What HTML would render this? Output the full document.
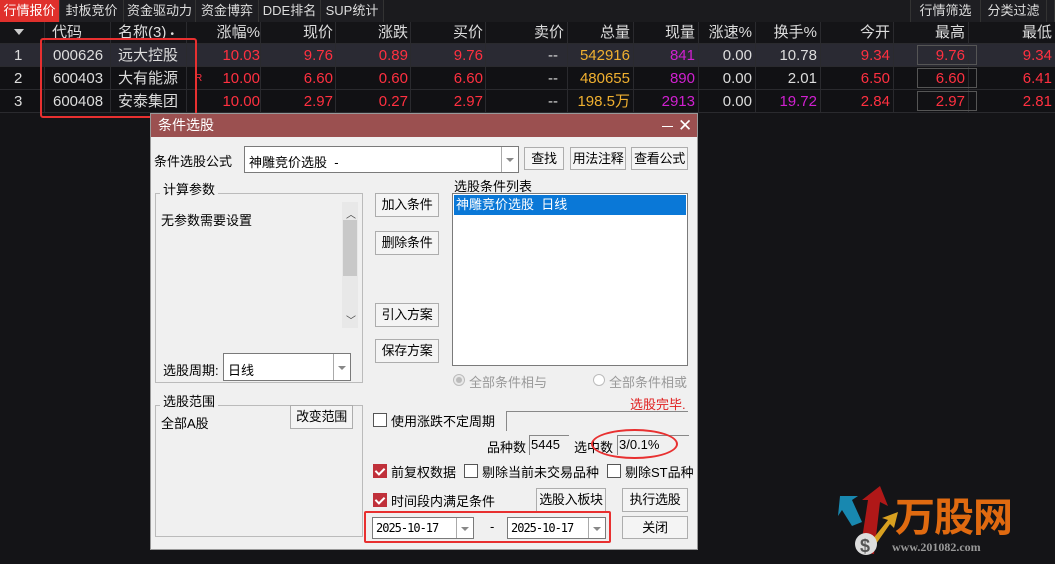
<!DOCTYPE html>
<html><head><meta charset="utf-8"><style>
*{margin:0;padding:0;box-sizing:border-box}
body{width:1055px;height:564px;background:#141417;overflow:hidden;position:relative;font-family:"Liberation Sans","Noto Sans CJK SC",sans-serif;font-size:14px;color:#ddd}
.a{position:absolute;white-space:nowrap}
.tab{position:absolute;top:0;height:22px;line-height:22px;font-size:13px;color:#ddd;background:#1e1e22;border-right:1px solid #333;text-align:center}
.row{position:absolute;left:0;width:1055px;height:23px;border-bottom:1px solid #2a2a2e}
.c{position:absolute;height:23px;line-height:23px;font-size:15px;text-align:right;white-space:nowrap}
.sep{position:absolute;top:22px;width:1px;height:91px;background:#2a2a2e}
.r{color:#ff3040}.y{color:#f0b030}.m{color:#d020d0}.w{color:#ddd}
.dlg{position:absolute;left:150px;top:113px;width:548px;height:437px;background:#f0f0f0;border:1px solid #999;color:#000;font-size:13px}
.dlg div,.dlg span{white-space:nowrap}
.btn{position:absolute;background:#f4f4f4;border:1px solid #adadad;text-align:center;font-size:13px;color:#000;letter-spacing:-0.3px}
.box{position:absolute;background:#fff;border:1px solid #7a7a7a}
.dd{position:absolute;top:0;right:0;width:17px;height:100%;border-left:1px solid #aaa;background:#fff}
.dd:after{content:"";position:absolute;left:4px;top:45%;border:4px solid transparent;border-top:4px solid #888}
.cb{position:absolute;width:14px;height:14px;border:1px solid #555;background:#fff}
.cb.on{background:#c0303a;border-color:#c0303a}
.cb.on:after{content:"";position:absolute;left:3px;top:1px;width:4px;height:7px;border:solid #fff;border-width:0 2px 2px 0;transform:rotate(45deg)}
.grp{position:absolute;border:1px solid #bbb}
.t{font-size:13px}
</style></head><body>
<div class="tab" style="left:0;width:60px;background:#e0302c;color:#fff">行情报价</div>
<div class="tab" style="left:60px;width:64px">封板竞价</div>
<div class="tab" style="left:124px;width:72px">资金驱动力</div>
<div class="tab" style="left:196px;width:63px">资金博弈</div>
<div class="tab" style="left:259px;width:62px">DDE排名</div>
<div class="tab" style="left:321px;width:63px">SUP统计</div>
<div class="a" style="left:384px;top:0;width:536px;height:22px;background:#1b1b1e"></div>
<div class="tab" style="left:910px;width:71px;border-left:1px solid #333">行情筛选</div>
<div class="tab" style="left:981px;width:66px">分类过滤</div>
<div class="tab" style="left:1047px;width:8px"></div>

<div class="row" style="top:22px;height:22px;background:#141417"></div>
<div class="row" style="top:44px;background:#2a2a33"></div>
<div class="row" style="top:67px;background:#111114"></div>
<div class="row" style="top:90px;background:#111114"></div>
<div class="sep" style="left:44px"></div><div class="sep" style="left:110px"></div><div class="sep" style="left:186px"></div><div class="sep" style="left:260px"></div><div class="sep" style="left:335px"></div><div class="sep" style="left:410px"></div><div class="sep" style="left:485px"></div><div class="sep" style="left:567px"></div><div class="sep" style="left:633px"></div><div class="sep" style="left:698px"></div><div class="sep" style="left:755px"></div><div class="sep" style="left:820px"></div><div class="sep" style="left:893px"></div><div class="sep" style="left:968px"></div>
<div class="a" style="left:14px;top:29px;border:5px solid transparent;border-top:6px solid #ccc"></div>
<div class="c w" style="left:52px;top:21px;text-align:left">代码</div>
<div class="c w" style="left:118px;top:21px;text-align:left">名称(3) <span style="font-size:10px">•</span></div>
<div class="c w" style="right:795px;top:21px">涨幅%</div>
<div class="c w" style="right:722px;top:21px">现价</div>
<div class="c w" style="right:647px;top:21px">涨跌</div>
<div class="c w" style="right:572px;top:21px">买价</div>
<div class="c w" style="right:491px;top:21px">卖价</div>
<div class="c w" style="right:425px;top:21px">总量</div>
<div class="c w" style="right:360px;top:21px">现量</div>
<div class="c w" style="right:303px;top:21px">涨速%</div>
<div class="c w" style="right:238px;top:21px">换手%</div>
<div class="c w" style="right:165px;top:21px">今开</div>
<div class="c w" style="right:90px;top:21px">最高</div>
<div class="c w" style="right:3px;top:21px">最低</div>

<div class="c w" style="left:14px;top:44px">1</div>
<div class="c w" style="left:14px;top:67px">2</div>
<div class="c w" style="left:14px;top:90px">3</div>
<div class="c w" style="left:53px;top:44px;text-align:left">000626</div><div class="c w" style="left:118px;top:44px;text-align:left">远大控股</div>
<div class="c w" style="left:53px;top:67px;text-align:left">600403</div><div class="c w" style="left:118px;top:67px;text-align:left">大有能源</div>
<div class="c w" style="left:53px;top:90px;text-align:left">600408</div><div class="c w" style="left:118px;top:90px;text-align:left">安泰集团</div>
<div class="a r" style="left:195px;top:73px;font-size:10px">R</div>

<div class="c r" style="right:795px;top:44px">10.03</div><div class="c r" style="right:722px;top:44px">9.76</div><div class="c r" style="right:647px;top:44px">0.89</div><div class="c r" style="right:572px;top:44px">9.76</div><div class="c w" style="right:497px;top:44px">--</div><div class="c y" style="right:425px;top:44px">542916</div><div class="c m" style="right:360px;top:44px">841</div><div class="c w" style="right:303px;top:44px">0.00</div><div class="c w" style="right:238px;top:44px">10.78</div><div class="c r" style="right:165px;top:44px">9.34</div><div class="c r" style="right:90px;top:44px">9.76</div><div class="c r" style="right:3px;top:44px">9.34</div>
<div class="c r" style="right:795px;top:67px">10.00</div><div class="c r" style="right:722px;top:67px">6.60</div><div class="c r" style="right:647px;top:67px">0.60</div><div class="c r" style="right:572px;top:67px">6.60</div><div class="c w" style="right:497px;top:67px">--</div><div class="c y" style="right:425px;top:67px">480655</div><div class="c m" style="right:360px;top:67px">890</div><div class="c w" style="right:303px;top:67px">0.00</div><div class="c w" style="right:238px;top:67px">2.01</div><div class="c r" style="right:165px;top:67px">6.50</div><div class="c r" style="right:90px;top:67px">6.60</div><div class="c r" style="right:3px;top:67px">6.41</div>
<div class="c r" style="right:795px;top:90px">10.00</div><div class="c r" style="right:722px;top:90px">2.97</div><div class="c r" style="right:647px;top:90px">0.27</div><div class="c r" style="right:572px;top:90px">2.97</div><div class="c w" style="right:497px;top:90px">--</div><div class="c y" style="right:425px;top:90px">198.5万</div><div class="c m" style="right:360px;top:90px">2913</div><div class="c w" style="right:303px;top:90px">0.00</div><div class="c m" style="right:238px;top:90px">19.72</div><div class="c r" style="right:165px;top:90px">2.84</div><div class="c r" style="right:90px;top:90px">2.97</div><div class="c r" style="right:3px;top:90px">2.81</div>
<div class="a" style="left:917px;top:45px;width:60px;height:20px;border:1px solid #555"></div>
<div class="a" style="left:917px;top:68px;width:60px;height:20px;border:1px solid #555"></div>
<div class="a" style="left:917px;top:91px;width:60px;height:20px;border:1px solid #555"></div>
<div class="a" style="left:40px;top:38px;width:157px;height:80px;border:2px solid #e83030;border-radius:3px"></div>

<!-- logo -->
<div class="a" style="left:895px;top:494px;font-size:40px;font-weight:bold;color:#e06a10;letter-spacing:-1px;line-height:48px">万股网</div>
<div class="a" style="left:892px;top:540px;font-size:12px;font-weight:bold;color:#999;font-family:'Liberation Serif',serif">www.201082.com</div>
<svg class="a" style="left:832px;top:482px" width="70" height="82"><path d="M28 70 L36 18 L30 18 L48 4 L56 24 L48 20 L42 72Z" fill="#b01818"/><path d="M20 44 L10 28 L6 34 L8 14 L26 14 L20 18 L30 40Z" fill="#1888b0"/><path d="M40 58 L56 38 L50 36 L66 30 L62 46 L58 42 L44 62Z" fill="#d8a020"/><circle cx="34" cy="62" r="11" fill="#ddd"/><text x="28" y="70" font-size="18" font-weight="bold" fill="#555">$</text></svg>

<!-- dialog -->
<div class="dlg">
<div class="a" style="left:0;top:0;width:546px;height:23px;background:#9b5050;color:#fff;font-size:14px;line-height:23px;padding-left:7px">条件选股</div>
<div class="a" style="left:511px;top:12px;width:11px;height:1px;background:#fff"></div>
<div class="a" style="left:527px;top:1px;color:#fff;font-size:17px;line-height:22px">✕</div>
<div class="a t" style="left:3px;top:37px">条件选股公式</div>
<div class="box" style="left:93px;top:32px;width:275px;height:27px"><span class="a t" style="left:4px;top:5px">神雕竞价选股 &nbsp;-</span><div class="dd"></div></div>
<div class="btn" style="left:373px;top:33px;width:40px;height:23px;line-height:21px">查找</div>
<div class="btn" style="left:419px;top:33px;width:56px;height:23px;line-height:21px">用法注释</div>
<div class="btn" style="left:480px;top:33px;width:57px;height:23px;line-height:21px">查看公式</div>

<div class="grp" style="left:4px;top:79px;width:208px;height:190px"></div>
<div class="a t" style="left:9px;top:65px;background:#f0f0f0;padding:0 3px">计算参数</div>
<div class="a t" style="left:10px;top:96px">无参数需要设置</div>
<div class="a" style="left:191px;top:88px;width:16px;height:126px;background:#e8e8e8"></div>
<div class="a" style="left:192px;top:106px;width:14px;height:56px;background:#c8c8c8"></div>
<div class="a" style="left:195px;top:92px;font-size:10px;color:#444">︿</div>
<div class="a" style="left:195px;top:198px;font-size:10px;color:#444">﹀</div>
<div class="a t" style="left:12px;top:246px">选股周期:</div>
<div class="box" style="left:72px;top:239px;width:128px;height:28px"><span class="a t" style="left:4px;top:6px">日线</span><div class="dd"></div></div>

<div class="grp" style="left:4px;top:291px;width:208px;height:132px"></div>
<div class="a t" style="left:9px;top:277px;background:#f0f0f0;padding:0 3px">选股范围</div>
<div class="a t" style="left:10px;top:299px">全部A股</div>
<div class="btn" style="left:139px;top:291px;width:63px;height:24px;line-height:22px">改变范围</div>

<div class="btn" style="left:224px;top:79px;width:64px;height:24px;line-height:22px">加入条件</div>
<div class="btn" style="left:224px;top:117px;width:64px;height:24px;line-height:22px">删除条件</div>
<div class="btn" style="left:224px;top:189px;width:64px;height:24px;line-height:22px">引入方案</div>
<div class="btn" style="left:224px;top:225px;width:64px;height:24px;line-height:22px">保存方案</div>

<div class="a t" style="left:303px;top:62px">选股条件列表</div>
<div class="box" style="left:301px;top:79px;width:236px;height:173px"><div class="a t" style="left:1px;top:1px;width:232px;height:20px;background:#0a78d7;color:#fff;line-height:20px;padding-left:2px">神雕竞价选股 &nbsp;日线</div></div>
<div class="a" style="left:302px;top:260px;width:12px;height:12px;border-radius:50%;border:1px solid #bbb;background:#e8e8e8"><div style="margin:2px;width:6px;height:6px;border-radius:50%;background:#bbb"></div></div>
<div class="a t" style="left:318px;top:258px;color:#999">全部条件相与</div>
<div class="a" style="left:442px;top:260px;width:12px;height:12px;border-radius:50%;border:1px solid #bbb;background:#fff"></div>
<div class="a t" style="left:458px;top:258px;color:#999">全部条件相或</div>
<div class="a" style="left:479px;top:280px;color:#e02020;font-size:13px">选股完毕.</div>

<div class="cb" style="left:222px;top:299px"></div>
<div class="a t" style="left:240px;top:297px">使用涨跌不定周期</div>
<div class="a" style="left:355px;top:297px;width:182px;height:20px;border-top:1px solid #888;border-left:1px solid #888"></div>
<div class="a t" style="left:336px;top:323px">品种数</div>
<div class="a t" style="left:378px;top:321px;width:40px;height:20px;border-top:1px solid #888;border-left:1px solid #888;padding-left:1px;padding-top:1px">5445</div>
<div class="a t" style="left:423px;top:323px">选中数</div>
<div class="a t" style="left:466px;top:321px;width:72px;height:20px;border-top:1px solid #888;border-left:1px solid #888;padding-left:1px;padding-top:1px">3/0.1%</div>
<div class="a" style="left:440px;top:315px;width:87px;height:30px;border:2px solid #e83030;border-radius:50%"></div>

<div class="cb on" style="left:222px;top:350px"></div>
<div class="a t" style="left:240px;top:348px">前复权数据</div>
<div class="cb" style="left:313px;top:350px"></div>
<div class="a t" style="left:331px;top:348px">剔除当前未交易品种</div>
<div class="cb" style="left:456px;top:350px"></div>
<div class="a t" style="left:474px;top:348px">剔除ST品种</div>

<div class="cb on" style="left:222px;top:379px"></div>
<div class="a t" style="left:240px;top:377px">时间段内满足条件</div>
<div class="btn" style="left:385px;top:374px;width:70px;height:24px;line-height:22px">选股入板块</div>
<div class="btn" style="left:471px;top:374px;width:66px;height:24px;line-height:22px">执行选股</div>

<div class="a" style="left:213px;top:397px;width:247px;height:32px;border:2px solid #e83030;border-radius:2px"></div>
<div class="box" style="left:221px;top:403px;width:102px;height:22px"><span class="a" style="left:3px;top:3px;font-size:12px;font-family:'DejaVu Sans Mono',monospace;letter-spacing:-1px">2025-10-17</span><div class="dd"></div></div>
<div class="a" style="left:339px;top:405px">-</div>
<div class="box" style="left:356px;top:403px;width:99px;height:22px"><span class="a" style="left:3px;top:3px;font-size:12px;font-family:'DejaVu Sans Mono',monospace;letter-spacing:-1px">2025-10-17</span><div class="dd"></div></div>
<div class="btn" style="left:471px;top:402px;width:66px;height:23px;line-height:21px">关闭</div>
</div>
</body></html>
